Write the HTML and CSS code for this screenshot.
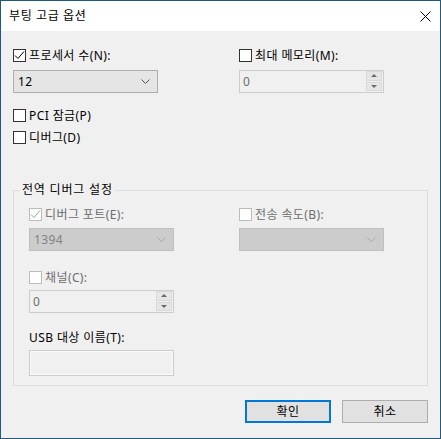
FILE: index.html
```html
<!DOCTYPE html>
<html lang="ko">
<head>
    <meta charset="UTF-8">
    <title>부팅 고급 옵션</title>
    <link rel="stylesheet" href="styles.css">
</head>
<body>
    <div class="win">
        <div class="titlebar">
            <span class="title">부팅 고급 옵션</span>
            <svg class="close" width="11" height="11" viewBox="0 0 11 11"><path d="M0.5 0.5L10.5 10.5M10.5 0.5L0.5 10.5" stroke="#000" stroke-width="1"/></svg>
        </div>
        <div class="content">
            <div class="top">
                <div class="field">
                    <label class="chk"><span class="box"><svg width="11" height="11" viewBox="0 0 11 11"><polyline points="1,5.5 4,8.5 10,1.5" fill="none" stroke="#000" stroke-width="1"/></svg></span>프로세서 수(N):</label>
                    <div class="combo"><span>12</span><svg width="9" height="5" viewBox="0 0 9 5"><polyline points="0.5,0.5 4.5,4.5 8.5,0.5" fill="none" stroke="#555" stroke-width="1"/></svg></div>
                </div>
                <div class="field">
                    <label class="chk"><span class="box"></span>최대 메모리(M):</label>
                    <div class="spin"><span class="val">0</span><span class="btns"><span class="up"></span><span class="down"></span></span></div>
                </div>
            </div>
            <label class="chk pci"><span class="box"></span>PCI 잠금(P)</label>
            <label class="chk dbg"><span class="box"></span>디버그(D)</label>

            <fieldset class="group">
                <legend>전역 디버그 설정</legend>
                <div class="inner">
                    <div class="grid">
                        <div class="field">
                            <label class="chk off"><span class="box"><svg width="11" height="11" viewBox="0 0 11 11"><polyline points="1,5.5 4,8.5 10,1.5" fill="none" stroke="#a0a0a0" stroke-width="1"/></svg></span>디버그 포트(E):</label>
                            <div class="combo off"><span>1394</span><svg width="9" height="5" viewBox="0 0 9 5"><polyline points="0.5,0.5 4.5,4.5 8.5,0.5" fill="none" stroke="#a8a8a8" stroke-width="1"/></svg></div>
                        </div>
                        <div class="field">
                            <label class="chk off"><span class="box"></span>전송 속도(B):</label>
                            <div class="combo off"><span></span><svg width="9" height="5" viewBox="0 0 9 5"><polyline points="0.5,0.5 4.5,4.5 8.5,0.5" fill="none" stroke="#a8a8a8" stroke-width="1"/></svg></div>
                        </div>
                    </div>
                    <div class="field chan">
                        <label class="chk off"><span class="box"></span>채널(C):</label>
                        <div class="spin"><span class="val">0</span><span class="btns"><span class="up"></span><span class="down"></span></span></div>
                    </div>
                    <div class="usb">USB 대상 이름(T):</div>
                    <div class="textbox"></div>
                </div>
            </fieldset>

            <div class="buttons">
                <button class="btn ok">확인</button>
                <button class="btn">취소</button>
            </div>
        </div>
    </div>
</body>
</html>
```

FILE: styles.css
```css
*{margin:0;padding:0;box-sizing:border-box;}
body{
    background:#f0f0f0;
    font:12px/13px "Noto Sans","Noto Sans CJK KR",sans-serif;
    letter-spacing:0.4px;
    color:#000;
}
.win{
    width:441px;
    height:439px;
    border:1px solid #1d5b7f;
    background:#f0f0f0;
    display:flex;
    flex-direction:column;
}
.titlebar{
    height:30px;
    background:#fff;
    display:flex;
    align-items:center;
    justify-content:space-between;
    padding:0 9px 0 8px;
}
.title{
    font-size:12px;
    line-height:14px;
    letter-spacing:0.6px;
}
.content{
    flex:1;
    padding:18px 12px 0;
    display:flex;
    flex-direction:column;
    align-items:flex-start;
}
.top{
    display:grid;
    grid-template-columns:226px 1fr;
    width:100%;
}
.field{
    display:flex;
    flex-direction:column;
    align-items:flex-start;
    gap:8px;
}
.chk{
    display:flex;
    align-items:center;
    height:13px;
    gap:3px;
    white-space:nowrap;
}
.box{
    width:13px;
    height:13px;
    border:1px solid #333;
    background:#fff;
    display:flex;
}
.chk.off{color:#6d6d6d;}
.chk.off .box{border-color:#bcbcbc;}
.pci{margin-top:16px;}
.dbg{margin-top:9px;}

.combo{
    width:145px;
    height:23px;
    border:1px solid #adadad;
    background:#e5e5e5;
    display:flex;
    align-items:center;
    justify-content:space-between;
    padding:0 7px 0 4px;
}
.combo.off{
    background:#cccccc;
    border-color:#bfbfbf;
    color:#838383;
}
.spin{
    width:145px;
    height:23px;
    border:1px solid #cccccc;
    background:#f0f0f0;
    display:flex;
    align-items:stretch;
    justify-content:space-between;
    color:#6d6d6d;
}
.spin .val{
    padding-left:3px;
    display:flex;
    align-items:center;
}
.btns{
    width:17px;
    display:flex;
    flex-direction:column;
    gap:1px;
    padding:0 1px 1px 0;
}
.up,.down{
    flex:1;
    background:#e6e6e6;
    border:1px solid #d9d9d9;
    display:flex;
    align-items:center;
    justify-content:center;
}
.up::after{
    content:"";
    border-left:3px solid transparent;
    border-right:3px solid transparent;
    border-bottom:3px solid #6a6a6a;
}
.down::after{
    content:"";
    border-left:3px solid transparent;
    border-right:3px solid transparent;
    border-top:3px solid #6a6a6a;
}

.group{
    margin-top:39px;
    width:100%;
    border:1px solid #dcdcdc;
    min-width:0;
}
.group legend{
    margin-left:6px;
    padding:0 2px;
    line-height:14px;
    letter-spacing:0.8px;
}
.inner{
    padding:11px 15px 9px;
    display:flex;
    flex-direction:column;
    align-items:flex-start;
}
.grid{
    display:grid;
    grid-template-columns:210px 1fr;
    width:100%;
}
.grid .field{gap:7px;}
.chan{
    margin-top:20px;
    gap:6px;
}
.usb{
    margin-top:18px;
}
.textbox{
    margin-top:6px;
    width:145px;
    height:26px;
    border:1px solid #cccccc;
    background:#f0f0f0;
    box-shadow:inset 0 0 0 1px #fafafa;
}

.buttons{
    margin-top:14px;
    align-self:stretch;
    display:flex;
    justify-content:flex-end;
    gap:11px;
}
.btn{
    width:86px;
    height:23px;
    border:1px solid #adadad;
    background:#e1e1e1;
    font:12px/13px "Noto Sans","Noto Sans CJK KR",sans-serif;
    letter-spacing:0.4px;
    color:#000;
}
.btn.ok{
    border:2px solid #0078d7;
}
```
